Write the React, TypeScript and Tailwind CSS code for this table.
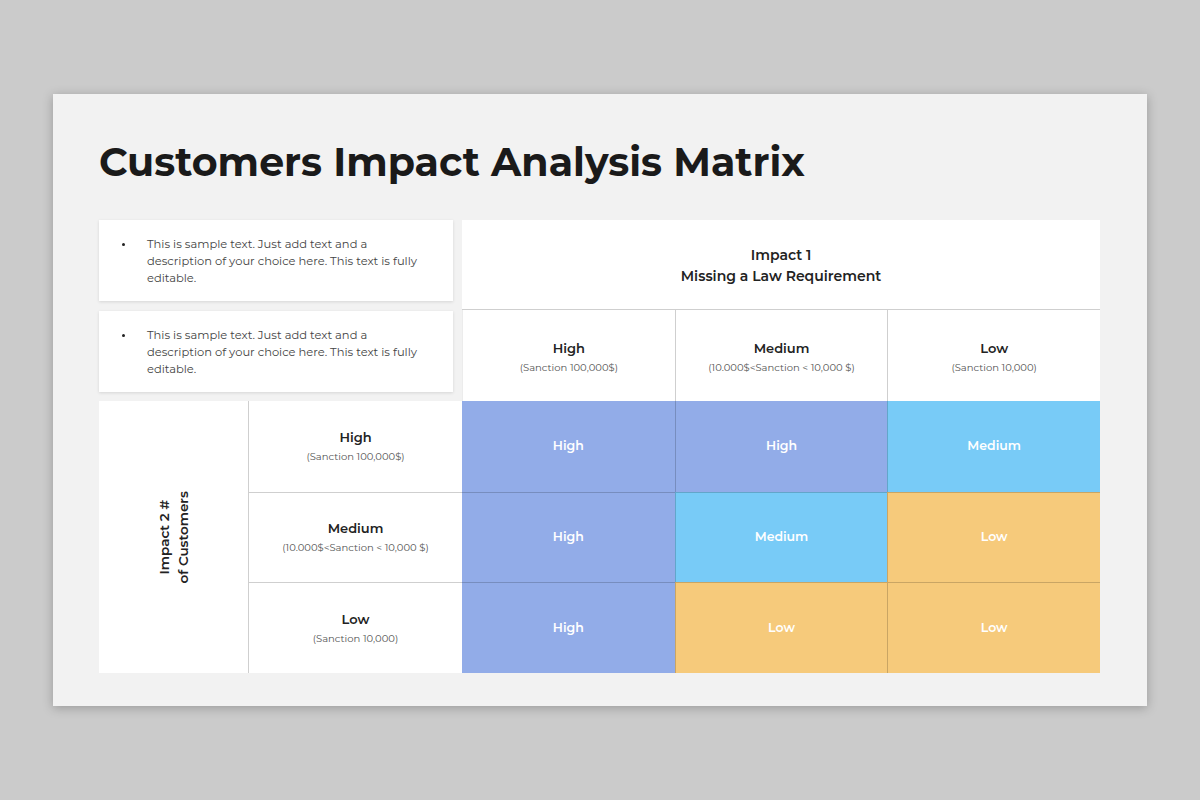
import React from "react";

const font = { fontFamily: "Montserrat, 'Inter', 'Open Sans', sans-serif" };

const cols = [
  { t: "High", s: "(Sanction 100,000$)" },
  { t: "Medium", s: "(10.000$<Sanction < 10,000 $)" },
  { t: "Low", s: "(Sanction 10,000)" },
];

const matrix: string[][] = [
  ["High", "High", "Medium"],
  ["High", "Medium", "Low"],
  ["High", "Low", "Low"],
];

function cellBg(v: string) {
  if (v === "High") return "bg-[#92ace8]";
  if (v === "Medium") return "bg-[#78cbf7]";
  return "bg-[#f6ca7b]";
}

function TextBox() {
  return (
    <div className="h-[81px] w-[354px] bg-white shadow-[0_1px_3px_rgba(0,0,0,0.12)] flex items-start pt-[16px]">
      <div className="w-[48px] h-[17px] flex items-center justify-end pr-[22px]">
        <span className="w-[3px] h-[3px] rounded-full bg-[#222]" />
      </div>
      <p className="text-[11.5px] leading-[17px] text-[#444]">
        This is sample text. Just add text and a<br />
        description of your choice here. This text is fully<br />
        editable.
      </p>
    </div>
  );
}

export default function App() {
  return (
    <div className="w-[1200px] h-[800px] bg-[#cbcbcb] flex items-center justify-center" style={font}>
      <div className="w-[1094px] h-[612px] bg-[#f2f2f2] shadow-[0_2px_10px_rgba(0,0,0,0.25)] pl-[46px] pr-[47px] pt-[42px]">
        <h1 className="text-[39.5px] font-bold text-[#1a1a1a] leading-[52px]">
          Customers Impact Analysis Matrix
        </h1>
        <div className="mt-[32px] flex flex-col">
          {/* top section */}
          <div className="flex h-[181px]">
            <div className="w-[363px] flex flex-col gap-[10px]">
              <TextBox />
              <TextBox />
            </div>
            <div className="w-[638px] bg-white flex flex-col">
              <div className="h-[90px] border-b border-[#cfcfcf] flex flex-col items-center justify-center pt-[3px] text-[14px] font-semibold text-[#222] leading-[21px]">
                <span>Impact 1</span>
                <span>Missing a Law Requirement</span>
              </div>
              <div className="flex-1 grid grid-cols-3">
                {cols.map((c, i) => (
                  <div
                    key={i}
                    className={`flex flex-col items-center justify-center pt-[3px] ${i > 0 ? "border-l border-[#cfcfcf]" : "border-l border-[#ececec]"}`}
                  >
                    <span className="text-[13px] font-semibold text-[#222] leading-[20px]">{c.t}</span>
                    <span className="text-[10px] text-[#555] leading-[19px]">{c.s}</span>
                  </div>
                ))}
              </div>
            </div>
          </div>
          {/* bottom section */}
          <div className="flex h-[272px]">
            <div className="w-[150px] bg-white border-r border-[#cfcfcf] flex items-center justify-center">
              <div className="[writing-mode:vertical-rl] rotate-180 text-center text-[13.5px] font-semibold text-[#222] leading-[19px]">
                Impact 2 #<br />of Customers
              </div>
            </div>
            <div className="w-[213px] bg-white grid grid-rows-3">
              {cols.map((c, i) => (
                <div
                  key={i}
                  className={`flex flex-col items-center justify-center pt-[1px] ${i > 0 ? "border-t border-[#cfcfcf]" : ""}`}
                >
                  <span className="text-[13px] font-semibold text-[#222] leading-[20px]">{c.t}</span>
                  <span className="text-[10px] text-[#555] leading-[19px]">{c.s}</span>
                </div>
              ))}
            </div>
            <div className="w-[638px] grid grid-cols-3 grid-rows-3">
              {matrix.map((row, r) =>
                row.map((v, c) => (
                  <div
                    key={`${r}-${c}`}
                    className={`${cellBg(v)} flex items-center justify-center text-white text-[12.5px] font-semibold ${c > 0 ? "border-l border-[rgba(0,0,0,0.18)]" : ""} ${r > 0 ? "border-t border-[rgba(0,0,0,0.18)]" : ""}`}
                  >
                    {v}
                  </div>
                ))
              )}
            </div>
          </div>
        </div>
      </div>
    </div>
  );
}
